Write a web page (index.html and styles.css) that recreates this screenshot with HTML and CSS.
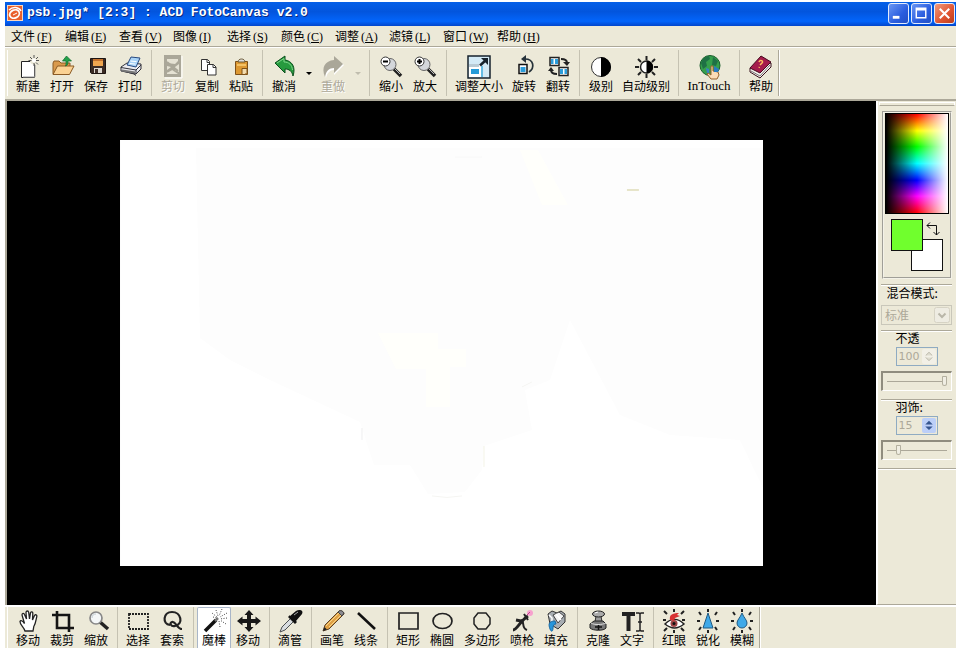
FILE: index.html
```html
<!DOCTYPE html>
<html lang="zh-CN">
<head>
<meta charset="utf-8">
<title>psb.jpg* [2:3] : ACD FotoCanvas v2.0</title>
<link rel="stylesheet" href="styles.css">
</head>
<body>
<div class="window">
  <header class="titlebar">
    <svg class="app-icon" viewBox="0 0 16 16"><rect x=".5" y=".5" width="15" height="15" fill="#e9602c" stroke="#fbd6bd"/><ellipse cx="7.500" cy="9" rx="5" ry="4" transform="rotate(-25 7.500 9)" fill="none" stroke="#fff" stroke-width="1.700"/><path d="M2 5C6 1 12 2 14 6" fill="none" stroke="#fff" stroke-width="1.500"/><path d="M6 10l4-2" stroke="#fff"/></svg>
    <h1 class="title">psb.jpg* [2:3] : ACD FotoCanvas v2.0</h1>
    <div class="window-buttons">
      <button class="win-btn" aria-label="最小化"><svg viewBox="0 0 20 20"><path d="M4 14h7" stroke="#fff" stroke-width="3"/></svg></button>
      <button class="win-btn" aria-label="最大化"><svg viewBox="0 0 20 20"><path d="M4.500 4.500h10v10h-10zM4 6h11" fill="none" stroke="#fff" stroke-width="1.500"/></svg></button>
      <button class="win-btn win-close" aria-label="关闭"><svg viewBox="0 0 20 20"><path d="M5 5l10 10M15 5L5 15" stroke="#fff" stroke-width="2.200"/></svg></button>
    </div>
  </header>

  <nav class="menubar">
    <button class="menu">文件<span class="key">(<u>F</u>)</span></button>
    <button class="menu">编辑<span class="key">(<u>E</u>)</span></button>
    <button class="menu">查看<span class="key">(<u>V</u>)</span></button>
    <button class="menu">图像<span class="key">(<u>I</u>)</span></button>
    <button class="menu">选择<span class="key">(<u>S</u>)</span></button>
    <button class="menu">颜色<span class="key">(<u>C</u>)</span></button>
    <button class="menu">调整<span class="key">(<u>A</u>)</span></button>
    <button class="menu">滤镜<span class="key">(<u>L</u>)</span></button>
    <button class="menu">窗口<span class="key">(<u>W</u>)</span></button>
    <button class="menu">帮助<span class="key">(<u>H</u>)</span></button>
  </nav>

  <div class="toolbar">
    <div class="group">
      <button class="tool"><svg class="icon" viewBox="0 0 24 24"><path d="M5.500 6.500h11l2 2v14h-13z" fill="#fff" stroke="#222"/><path d="M7 22h12V10" fill="none" stroke="#999"/><circle cx="18" cy="5.500" r="4" fill="#ece9d8"/><path d="M18 0v3M18 8v3M12.500 5.500h3M20 5.500h3M14 2l2 2M20 7.500l2 2M22 2l-2 2" stroke="#555"/><circle cx="18" cy="5.500" r="2" fill="#fff"/></svg>新建</button>
      <button class="tool"><svg class="icon" viewBox="0 0 24 24"><path d="M3 19V8l1-2h5l2 2h9v4" fill="#d99a4d" stroke="#8a5a25"/><path d="M3 19.500L7.500 11H24l-4.500 8.500z" fill="#fbd293" stroke="#8a5a25"/><path d="M16.500 1l5 5H18c0 3 0 4-2.500 5 .8-2 .5-3 .5-5h-3.500z" fill="#24a04a" stroke="#0d6a2c" stroke-width=".7"/></svg>打开</button>
      <button class="tool"><svg class="icon" viewBox="0 0 24 24"><path d="M6.500 3.500h15v15h-14l-1-1z" fill="#3a2b24" stroke="#1d1512"/><path d="M9 4h10v7H9z" fill="#efa64f"/><path d="M9 4h10v2H9z" fill="#c4712d"/><path d="M10 13h8v5h-8z" fill="#dcd7d0"/><path d="M11 14h3v4h-3z" fill="#40302a"/></svg>保存</button>
      <button class="tool"><svg class="icon" viewBox="0 0 24 24"><path d="M3 12l6-4 14 1v5l-5 5-15-3z" fill="#ececf0" stroke="#31313a"/><path d="M9 10l4-8 9 1-4 9z" fill="#a9d3f7" stroke="#274980"/><path d="M12.500 6l6 .6M11.500 8.500l6 .6" stroke="#fff"/><path d="M3 12.500l15 2.500 5-5M18 15v4M5 16l11 3 2 1.500" fill="none" stroke="#31313a"/><path d="M4 15.500l13 2" stroke="#777" stroke-width="2"/></svg>打印</button>
    </div>
    <div class="group">
      <button class="tool" disabled><svg class="icon" viewBox="0 0 24 24"><path d="M3 0h17v22H3z" fill="#aaa799"/><path d="M21 1v22H4" fill="none" stroke="#fff"/><path d="M6 4h11v2l-3 3-8-1zM6 11l4 1-4 3zM14 12l4-3v8l-4-2zM6 19v-2l5-2 3 2 3 2z" fill="#e5e2d4"/><path d="M6 7l11 9M6 17l5-3" stroke="#aaa799" stroke-width="2"/></svg>剪切</button>
      <button class="tool"><svg class="icon" viewBox="0 0 24 24"><path d="M6.500 4.500h6l2 2v9h-8z" fill="#fff" stroke="#333"/><path d="M12 4.500v3h3" fill="none" stroke="#333"/><path d="M12.500 9.500h6l2.500 2.500v8h-8.500z" fill="#fff" stroke="#333"/><path d="M18 9.500v3h3" fill="none" stroke="#333"/></svg>复制</button>
      <button class="tool"><svg class="icon" viewBox="0 0 24 24"><path d="M6.500 6.500h12v13h-12z" fill="#dc9832" stroke="#7d5019"/><path d="M8 9h9v2H8z" fill="#f4c264"/><path d="M9 7c0-4 7-4 7 0z" fill="#ddd" stroke="#6b5a38"/><path d="M13 13.500h5v4l-2 2h-3z" fill="#f3dcae" stroke="#7d5019"/></svg>粘贴</button>
    </div>
    <div class="group">
      <button class="tool"><svg class="icon" viewBox="0 0 24 24"><path d="M3 8l10-7v4c7 1 11 7 8 16-1-5-4-7-8-7v4z" fill="#269a3e" stroke="#0a4f1c"/><path d="M5 8l7-4.500V7c5 0 8 3 8.500 8" fill="none" stroke="#7fd68a"/></svg>撤消</button>
      <button class="drop" aria-label="撤消历史"></button>
      <button class="tool" disabled><svg class="icon" viewBox="0 0 24 24"><path d="M23 10L13 2v4C4 7 1 13 5 23c1-5 4-8 8-8v5z" fill="#fff"/><path d="M22 9L13 1v4C4 6 0 12 4 22c1-6 4-9 9-9v5z" fill="#aaa799"/></svg>重做</button>
      <button class="drop" disabled aria-label="重做历史"></button>
    </div>
    <div class="group">
      <button class="tool"><svg class="icon" viewBox="0 0 24 24"><path d="M15 14l7 7" stroke="#222" stroke-width="3.500"/><path d="M15 13l6 6" stroke="#bbb"/><circle cx="11" cy="9.500" r="6" fill="#d4d7db" stroke="#666"/><circle cx="6.500" cy="6.500" r="4.500" fill="#fff" stroke="#333"/><path d="M4 6.500h5" stroke="#000" stroke-width="2"/></svg>缩小</button>
      <button class="tool"><svg class="icon" viewBox="0 0 24 24"><path d="M15 14l7 7" stroke="#222" stroke-width="3.500"/><path d="M15 13l6 6" stroke="#bbb"/><circle cx="11" cy="9.500" r="6" fill="#d4d7db" stroke="#666"/><circle cx="6.500" cy="6.500" r="4.500" fill="#fff" stroke="#333"/><path d="M4 6.500h5M6.500 4v5" stroke="#000" stroke-width="2"/></svg>放大</button>
    </div>
    <div class="group">
      <button class="tool wide"><svg class="icon" viewBox="0 0 24 24"><path d="M1 1h22v22H1z" fill="#d3eaf6" stroke="#16222c" stroke-width="1.500"/><path d="M2 9h12v13H2z" fill="#fff"/><path d="M4 14h8v5H4z" fill="#259bd8"/><path d="M2 9h10v3H2z" fill="#b9cbd5"/><path d="M15 11v11" stroke="#64bce4" stroke-width="2"/><path d="M13 10.500L19 5" stroke="#16222c" stroke-width="2.500"/><path d="M14 3h7v7z" fill="#16222c"/></svg>调整大小</button>
      <button class="tool"><svg class="icon" viewBox="0 0 24 24"><path d="M7 9.500h8v9H7z" fill="#fff" stroke="#111" stroke-width="1.500"/><path d="M8.500 12h5v5h-5z" fill="#2c9dda"/><path d="M13 4c9 0 10 9 4 13" fill="none" stroke="#26323a" stroke-width="1.700"/><path d="M14 0v8l-5-4z" fill="#26323a"/></svg>旋转</button>
      <button class="tool"><svg class="icon" viewBox="0 0 24 24"><path d="M4 2.500h9v8H4z" fill="#fff" stroke="#222" stroke-width="1.500"/><path d="M5 4h2.500v5H5zM9 4h3v5H9z" fill="#2c9dda"/><path d="M13 12.500h9v8h-9z" fill="#fff" stroke="#222" stroke-width="1.500"/><path d="M14 14h3v5h-3zM18.500 14H21v5h-2.500z" fill="#2c9dda"/><path d="M15 4c4 0 6 1 6 4M11 19c-4 0-6-1-6-4" fill="none" stroke="#222" stroke-width="2"/><path d="M17 7h7l-3 4zM2 16h6l-3-4z" fill="#222"/></svg>翻转</button>
    </div>
    <div class="group">
      <button class="tool"><svg class="icon" viewBox="0 0 24 24"><circle cx="12" cy="12" r="9.500" fill="#fff" stroke="#333"/><path d="M12 2a10 10 0 010 20z" fill="#000"/></svg>级别</button>
      <button class="tool wide"><svg class="icon" viewBox="0 0 24 24"><path d="M12.500 1v4M12.500 19v4M1 12h4M20 12h4M4 4l3 3M21 4l-3 3M4 20l3-3M21 20l-3-3" stroke="#222" stroke-width="2"/><circle cx="12.500" cy="12" r="6" fill="#fff" stroke="#222" stroke-width="1.500"/><path d="M12.500 5.500a6.500 6.500 0 010 13z" fill="#000"/></svg>自动级别</button>
    </div>
    <div class="group">
      <button class="tool intouch"><svg class="icon" viewBox="0 0 24 24"><circle cx="13" cy="10.500" r="10" fill="#36a04c" stroke="#195d2c"/><path d="M4 8c2-5 5-7 8-7l1 3-4 3 1 4-4 3zM16 2l5 4-2 5-4-1z" fill="#1f7145"/><path d="M9 13l3 1v5l-2-1z" fill="#3c7fc4"/><path d="M14 11h2v5l5 1 1 3-2 4h-6l-4-5 1-1 3 2z" fill="#fbdcb6" stroke="#96622d"/><path d="M17 11l5 3-1 3h-4z" fill="#2b7bc0"/></svg><span class="latin">InTouch</span></button>
    </div>
    <div class="group last">
      <button class="tool"><svg class="icon" viewBox="0 0 24 24"><path d="M1 13v4l10 6 11-11V8z" fill="#f6f1ed" stroke="#38101c"/><path d="M2 16l9 5 10-11" fill="none" stroke="#777"/><path d="M12 1l10 6-11 11-10-5z" fill="#a51d4c" stroke="#47091f"/><path d="M10 7c1-3 5-1 3 1l-2 2M10.500 12l-.5.8" fill="none" stroke="#ffbf5e" stroke-width="1.500"/></svg>帮助</button>
    </div>
  </div>

  <main class="workspace">
    <section class="desk">
      <svg class="picture" viewBox="0 0 644 427" role="img" aria-label="psb.jpg">
        <path d="M0 0h644v427H0z" fill="#fff"/>
        <path d="M76 8H644V350L620 300 550 295 500 275 450 180 430 240 405 250 412 290 364 306 362 330 345 352 308 354 290 325 254 325 240 282 150 240 110 220 80 198z" fill="#fdfdfd"/>
        <path d="M258 193h60v16h28v18h-16v40h-24v-38h-30zM400 10h18l30 55h-26z" fill="#fffffb"/>
        <path d="M364 306v21" stroke="#f3f3e6"/><path d="M242 288v12" stroke="#eeeef0"/>
        <path d="M507 50h12" stroke="#dfdcb8" stroke-width="1.500"/>
        <path d="M312 356q15 3 30 0M402 247l10-5" fill="none" stroke="#f5f5f2"/>
        <path d="M335 17h27" fill="none" stroke="#f8f8f8"/>
      </svg>
    </section>

    <aside class="panel">
      <div class="panel-grip"></div>
      <div class="colors">
        <button class="spectrum" aria-label="颜色"></button>
        <div class="swatches">
          <button class="swatch fore" aria-label="前景色"></button>
          <button class="swatch back" aria-label="背景色"></button>
          <button class="swap" aria-label="交换颜色"><svg viewBox="0 0 14 14"><path d="M1 3.500h9.500V13M4 .5l-3 3 3 3M7.500 10l3 3 3-3" fill="none" stroke="#111"/></svg></button>
        </div>
      </div>
      <div class="field">
        <label class="field-label mode-label" for="mode">混合模式:</label>
        <select id="mode" class="mode" disabled><option>标准</option></select>
      </div>
      <div class="field">
        <label class="field-label" for="opacity">不透</label>
        <div class="spin">
          <input id="opacity" class="spin-value" type="text" value="100" disabled>
          <span class="spin-arrows"><svg viewBox="0 0 15 16"><path d="M4 7l3.500-3.500L11 7M4 9l3.500 3.500L11 9" fill="#dfddd0" stroke="#b9b6a8"/></svg></span>
        </div>
        <div class="slider"><input class="range" type="range" min="0" max="100" value="100" disabled aria-label="不透"></div>
      </div>
      <div class="field">
        <label class="field-label" for="feather">羽饰:</label>
        <div class="spin">
          <input id="feather" class="spin-value" type="text" value="15" disabled>
          <span class="spin-arrows active"><svg viewBox="0 0 15 16"><path d="M3.500 7l4-4 4 4zM3.500 9l4 4 4-4z" fill="#35558f"/></svg></span>
        </div>
        <div class="slider"><input class="range" type="range" min="0" max="100" value="16" disabled aria-label="羽饰"></div>
      </div>
      <div class="panel-end"></div>
    </aside>
  </main>

  <footer class="toolbar toolbox">
    <div class="group">
      <button class="tool"><svg class="icon" viewBox="0 0 24 24"><path d="M9 22C8 18 4 16 4 12.500c1-2 3 0 4.500 2L6 6c0-2 2-2 2.500-.5L10.500 10 10 3.500c0-2 2.500-2 2.700 0L13.500 10l1-6c.5-2 2.500-1 2.300.5L16.500 11l2-4.500c1-1.500 2.700-.5 2.300 1-1 4-1 7-3 10L17 22z" fill="#fff" stroke="#222" stroke-width="1.300"/></svg>移动</button>
      <button class="tool"><svg class="icon" viewBox="0 0 24 24"><path d="M7 2v17h17M2 6h17v17" fill="none" stroke="#151515" stroke-width="2.600"/></svg>裁剪</button>
      <button class="tool"><svg class="icon" viewBox="0 0 24 24"><path d="M16 13l8 7" stroke="#222" stroke-width="3.500"/><circle cx="12" cy="9" r="6" fill="#f4f7f8" stroke="#888" stroke-width="1.700"/><path d="M8 9c0-3 2-4 4-4" fill="none" stroke="#c2ccd2"/></svg>缩放</button>
    </div>
    <div class="group">
      <button class="tool"><svg class="icon" viewBox="0 0 24 24"><path d="M3 5h19v15H3z" fill="none" stroke="#222" stroke-width="1.800" stroke-dasharray="2 1"/></svg>选择</button>
      <button class="tool"><svg class="icon" viewBox="0 0 24 24"><path d="M10 16C2 15 3 3 12 3s12 12 3 14c-4 1-6-3-3-4 4-1 5 7 10 7" fill="none" stroke="#222" stroke-width="2.200"/></svg>套索</button>
    </div>
    <div class="group">
      <button class="tool selected" aria-pressed="true"><svg class="icon" viewBox="0 0 24 24"><path d="M3 22L14 11" stroke="#111" stroke-width="3.500"/><path d="M13 12l3-3" stroke="#777" stroke-width="2.500"/><path d="M10 4l5 4M14 1l2 6M20 0l-3 7M25 4l-7 4M25 9l-7 1M24 15l-6-4M18 18l-1-6M11 8l4 1" stroke="#444" stroke-dasharray="1 1.500"/></svg>魔棒</button>
      <button class="tool"><svg class="icon" viewBox="0 0 24 24"><path d="M13 1l4.500 5H15v4h4.500V7.500L25 12l-5.500 4.500V14H15v4h2.500L13 23l-4.500-5H11v-4H6.500v2.500L1 12l5.500-4.500V10H11V6H8.500z" fill="#181818"/></svg>移动</button>
    </div>
    <div class="group">
      <button class="tool"><svg class="icon" viewBox="0 0 24 24"><path d="M2 23l2-5L14 8l3 3L7 21z" fill="#d9dde0" stroke="#4b4f51"/><path d="M12 7l6-5c3-2 8-1 6 3l-6 7 1 1-2 2-7-7 2-2z" fill="#111"/><path d="M16 6l4-3" stroke="#aaa"/></svg>滴管</button>
    </div>
    <div class="group">
      <button class="tool"><svg class="icon" viewBox="0 0 24 24"><path d="M3 22l2-6L19 2c2-1 5 1 5 3L9 20z" fill="#dfa044" stroke="#5c4328"/><path d="M6 17L19 4M9 18L21 6" stroke="#f7d589"/><path d="M18 3l4 4 2-3c-1-2-3-3-5-2z" fill="#8b8b91" stroke="#444"/><path d="M3 22l1.500-4L7 20.500z" fill="#222"/></svg>画笔</button>
      <button class="tool"><svg class="icon" viewBox="0 0 24 24"><path d="M4 4l17 16" stroke="#111" stroke-width="2.500"/></svg>线条</button>
    </div>
    <div class="group">
      <button class="tool"><svg class="icon" viewBox="0 0 24 24"><path d="M3 4h19v16H3z" fill="none" stroke="#222" stroke-width="1.700"/></svg>矩形</button>
      <button class="tool"><svg class="icon" viewBox="0 0 24 24"><ellipse cx="12.500" cy="12" rx="9.500" ry="7.500" fill="none" stroke="#222" stroke-width="1.700"/></svg>椭圆</button>
      <button class="tool poly"><svg class="icon" viewBox="0 0 24 24"><path d="M8 4h8l4 5v6l-4 5H8l-4-5V9z" fill="none" stroke="#222" stroke-width="1.500"/></svg>多边形</button>
      <button class="tool"><svg class="icon" viewBox="0 0 24 24"><path d="M3 21c4 0 7-9 15-14M6 11l5 1" fill="none" stroke="#222" stroke-width="3"/><path d="M11 11c4 1 0 8 6 10M14 5l4 6" fill="none" stroke="#222" stroke-width="2"/><circle cx="20" cy="4" r="3" fill="#f7a1ce"/><path d="M17 6l3-3" stroke="#c0408c"/></svg>喷枪</button>
      <button class="tool"><svg class="icon" viewBox="0 0 24 24"><path d="M4 5l4-3 5 2 4-2 4 3v8l-7 7-8-5z" fill="#a7adb2" stroke="#333"/><path d="M9 6l6-3 5 4-6 7z" fill="#f4f4f4" stroke="#444"/><path d="M5 6l3 3v6M12 5l5 6" fill="none" stroke="#fff" stroke-width="1.500"/><path d="M11 12c-6 0-7 3-5 8 1 3 3 3 3-1 0-3 1-4 3-4z" fill="#2795da" stroke="#1c6ba4"/></svg>填充</button>
    </div>
    <div class="group">
      <button class="tool"><svg class="icon" viewBox="0 0 24 24"><path d="M10 7h5l1 6h-7z" fill="#9c9c9c" stroke="#333"/><ellipse cx="12.500" cy="5" rx="6" ry="3" fill="#aaa" stroke="#222"/><path d="M4 15l4-3h9l3 3v4c-2 3-13 3-16 0z" fill="#777" stroke="#222"/><path d="M5 14c3 2 11 2 15 0" fill="none" stroke="#ddd"/><path d="M9 18h7M12.500 16v5" stroke="#111" stroke-width="1.500"/><path d="M9 4l3-1" stroke="#fff"/></svg>克隆</button>
      <button class="tool"><svg class="icon" viewBox="0 0 24 24"><path d="M2 5h13M8.500 5v17" stroke="#222" stroke-width="4"/><path d="M16 4h3l1 1 1-1h3M20 5v16M16 22h3l1-1 1 1h3M18 13h4" fill="none" stroke="#222" stroke-width="1.500"/></svg>文字</button>
    </div>
    <div class="group last">
      <button class="tool"><svg class="icon" viewBox="0 0 24 24"><path d="M12 0v3M12 21v3M2 2l3 3M22 2l-3 3M1 11h3M23 11h-3M2 22l3-3M22 22l-3-3" stroke="#222" stroke-width="2"/><path d="M3 15c6-6 13-6 19 0-6 5-13 5-19 0z" fill="#fff" stroke="#222" stroke-width="1.500"/><circle cx="12" cy="14.500" r="3.500" fill="#9c4546"/><circle cx="12" cy="14.500" r="1.500" fill="#111"/><path d="M8 11c-1-5 2-7 9-7l-2 2 3 1-5 2-1 3z" fill="#d83131"/></svg>红眼</button>
      <button class="tool"><svg class="icon" viewBox="0 0 24 24"><path d="M12 0v3M12 21v3M3 3l2 3M21 3l-2 3M1 12h3M23 12h-3M3 21l2-3M21 21l-2-3" stroke="#222" stroke-width="2"/><path d="M12 4l5 15H7z" fill="#40a9e8" stroke="#215a82"/></svg>锐化</button>
      <button class="tool"><svg class="icon" viewBox="0 0 24 24"><path d="M12 0v3M12 21v3M3 3l2 3M21 3l-2 3M1 12h3M23 12h-3M3 21l2-3M21 21l-2-3" stroke="#222" stroke-width="2"/><path d="M12 4c2 5 5 7 5 10a5 5 0 01-10 0c0-3 3-5 5-10z" fill="#40a9e8" stroke="#215a82"/></svg>模糊</button>
    </div>
  </footer>
</div>
</body>
</html>
```
FILE: styles.css
```css
* {
  box-sizing: border-box;
}

body {
  margin: 0;
  background: #fff;
  color: #000;
  font: 12px/14px "Noto Sans CJK SC", sans-serif;
}

button,
input,
select {
  margin: 0;
  padding: 0;
  border: 0;
  background: none;
  color: inherit;
  font: inherit;
}

.window {
  display: flex;
  flex-direction: column;
  height: 100vh;
  padding: 2px 2px 0 5px;
  overflow: hidden;
}

/* Title bar */
.titlebar {
  display: flex;
  align-items: center;
  flex: none;
  height: 24px;
  padding: 0 1px 2px 2px;
  background: linear-gradient(#0560e8 0, #0355dd 40%, #0365fb 80%, #0346cb 100%);
}

.app-icon {
  width: 16px;
  height: 16px;
  margin-right: 4px;
}

.title {
  flex: 1;
  margin: 0;
  color: #fff;
  font: bold 13px/16px "Liberation Mono", monospace;
  text-shadow: 1px 1px #0a2a80;
}

.window-buttons {
  display: flex;
  gap: 2px;
}

.win-btn {
  width: 21px;
  height: 21px;
  border: 1px solid #e4ecfc;
  border-radius: 3px;
  background: linear-gradient(135deg, #6a96f3, #2a5ddf 60%, #2350c4);
}

.win-btn svg {
  display: block;
}

.win-close {
  background: linear-gradient(135deg, #f09a7c, #df5330 60%, #b93c1c);
}

/* Menu bar */
.menubar {
  display: flex;
  flex: none;
  height: 20px;
  padding-left: 6px;
  background: #ece9d8;
}

.menu {
  width: 54px;
  text-align: left;
  white-space: nowrap;
}

.key {
  padding-left: 2px;
  font: 12px/14px "Liberation Serif", serif;
}

.latin {
  font: 13px/14px "Liberation Serif", serif;
}

/* Tool bars */
.toolbar {
  display: flex;
  flex: none;
  height: 55px;
  padding: 3px 2px;
  border-top: 1px solid #aca899;
  border-bottom: 2px solid #aca899;
  background: #ece9d8;
  box-shadow: inset 0 1px #fff;
}

.group {
  display: flex;
  padding: 0 4px;
  border-right: 1px solid #c5c2b2;
}

.group:first-child {
  border-left: 1px solid #fff;
  padding-left: 3px;
}

.group.last {
  padding-right: 0;
  border-color: #aca899;
  box-shadow: 1px 0 #fff;
}

.tool {
  display: flex;
  flex-direction: column;
  align-items: center;
  justify-content: center;
  width: 34px;
  padding-top: 2px;
  white-space: nowrap;
}

.tool:disabled {
  color: #aca899;
  text-shadow: 1px 1px #fff;
}

.icon {
  flex: none;
  width: 24px;
  height: 24px;
  overflow: visible;
}

.wide {
  width: 56px;
}

.intouch {
  width: 52px;
}

.poly {
  width: 46px;
}

.drop {
  width: 15px;
}

.drop::before {
  content: "";
  display: block;
  width: 0;
  margin: auto;
  border: 3px solid transparent;
  border-top-color: #000;
  border-bottom: 0;
}

.drop:disabled::before {
  border-top-color: #c0bdae;
}

/* Work area */
.workspace {
  display: flex;
  flex: 1;
  min-height: 0;
  border-left: 2px solid #aca899;
  background: #ece9d8;
}

.desk {
  display: flex;
  align-items: center;
  justify-content: center;
  flex: 1;
  background: #000;
}

.picture {
  width: 74.1%;
}

/* Side panel */
.panel {
  flex: none;
  width: 80px;
  border-left: 2px solid #fff;
  border-bottom: 1px solid #aca899;
}

.panel-grip {
  height: 4px;
  margin: 1px 1px 5px;
  border: 1px solid #fff;
  border-bottom-color: #aca899;
}

.colors {
  height: 168px;
  margin: 0 4px 5px;
  padding: 0 1px;
  border: 2px groove #f4f2e8;
}

.spectrum {
  display: block;
  width: 100%;
  height: 101px;
  border: 1px solid #000;
  background:
    linear-gradient(to right, #000, transparent 50%, #fff),
    linear-gradient(#f00, #ff0 17%, #0f0 33%, #0ff 50%, #00f 67%, #f0f 83%, #f00);
}

.swatches {
  display: grid;
  grid-template-columns: 20px 12px 20px;
  grid-template-rows: 20px 12px 20px;
  margin: 5px 6px;
}

.swatch {
  border: 1px solid #111;
}

.fore {
  z-index: 1;
  grid-area: 1 / 1 / 3 / 3;
  background: #70ff2d;
}

.back {
  grid-area: 2 / 2 / 4 / 4;
  background: #fff;
}

.swap {
  grid-area: 1 / 3;
  display: grid;
  place-items: center;
}

.swap svg {
  width: 14px;
  height: 14px;
}

.field {
  display: flex;
  flex-direction: column;
  align-items: center;
  margin: 0 4px 8px 3px;
  border-top: 1px solid #aca899;
  box-shadow: inset 0 1px #fff;
}

.field-label {
  display: block;
  min-width: 42px;
  margin-bottom: 2px;
}

.mode-label {
  width: 60px;
  margin: 1px 0 5px;
}

.mode {
  appearance: none;
  width: 100%;
  height: 20px;
  margin-bottom: -3px;
  padding: 0 3px;
  border: 1px solid #c9c7ba;
  border-radius: 0;
  background:
    url("data:image/svg+xml,%3Csvg xmlns='http://www.w3.org/2000/svg' viewBox='0 0 16 16'%3E%3Crect x='.5' y='.5' width='15' height='15' rx='2' fill='%23eeece2' stroke='%23d6d3c4'/%3E%3Cpath d='M4.500 6.500L8 10l3.500-3.500' fill='none' stroke='%23b9b6a8' stroke-width='2'/%3E%3C/svg%3E")
    right 1px center / 16px 16px no-repeat;
  color: #aca899;
  opacity: 1;
}

.spin {
  display: flex;
  width: 42px;
  height: 19px;
  margin-bottom: 5px;
  padding: 1px;
  border: 1px solid #8fabc2;
}

.spin-value {
  width: 24px;
  padding-left: 1px;
  color: #aca899;
  font: 11px/15px "DejaVu Sans", sans-serif;
}

.spin-arrows {
  width: 15px;
  border-radius: 2px;
  background: #f2f0e7;
}

.spin-arrows.active {
  background: #bccff8;
}

.spin-arrows svg {
  display: block;
}

.slider {
  display: flex;
  width: 100%;
  height: 20px;
  padding: 2px 4px;
  border: 1px solid #fff;
  border-top: 2px solid #8f8c7e;
  border-left: 2px solid #8f8c7e;
}

.range {
  appearance: none;
  width: 100%;
  height: 12px;
  background: linear-gradient(#aca899 0 0) center / 100% 1px no-repeat;
}

.range::-webkit-slider-thumb {
  appearance: none;
  width: 5px;
  height: 10px;
  border: 1px solid #b3b09f;
  border-radius: 1px 1px 3px 3px;
  background: #f0eee3;
}

.panel-end {
  border-top: 1px solid #aca899;
  border-bottom: 1px solid #fff;
}

/* Toolbox */
.toolbox {
  height: 43px;
  padding: 1px 2px 0;
  border-top-color: #fff;
  border-bottom: 0;
}

.toolbox .group {
  padding-left: 3px;
}

.toolbox .tool {
  justify-content: flex-end;
  padding-bottom: 1px;
}

.toolbox .selected {
  border: 1px solid #a9b6c8;
  border-bottom: 0;
  border-radius: 2px 2px 0 0;
  background: #fff;
}
```
